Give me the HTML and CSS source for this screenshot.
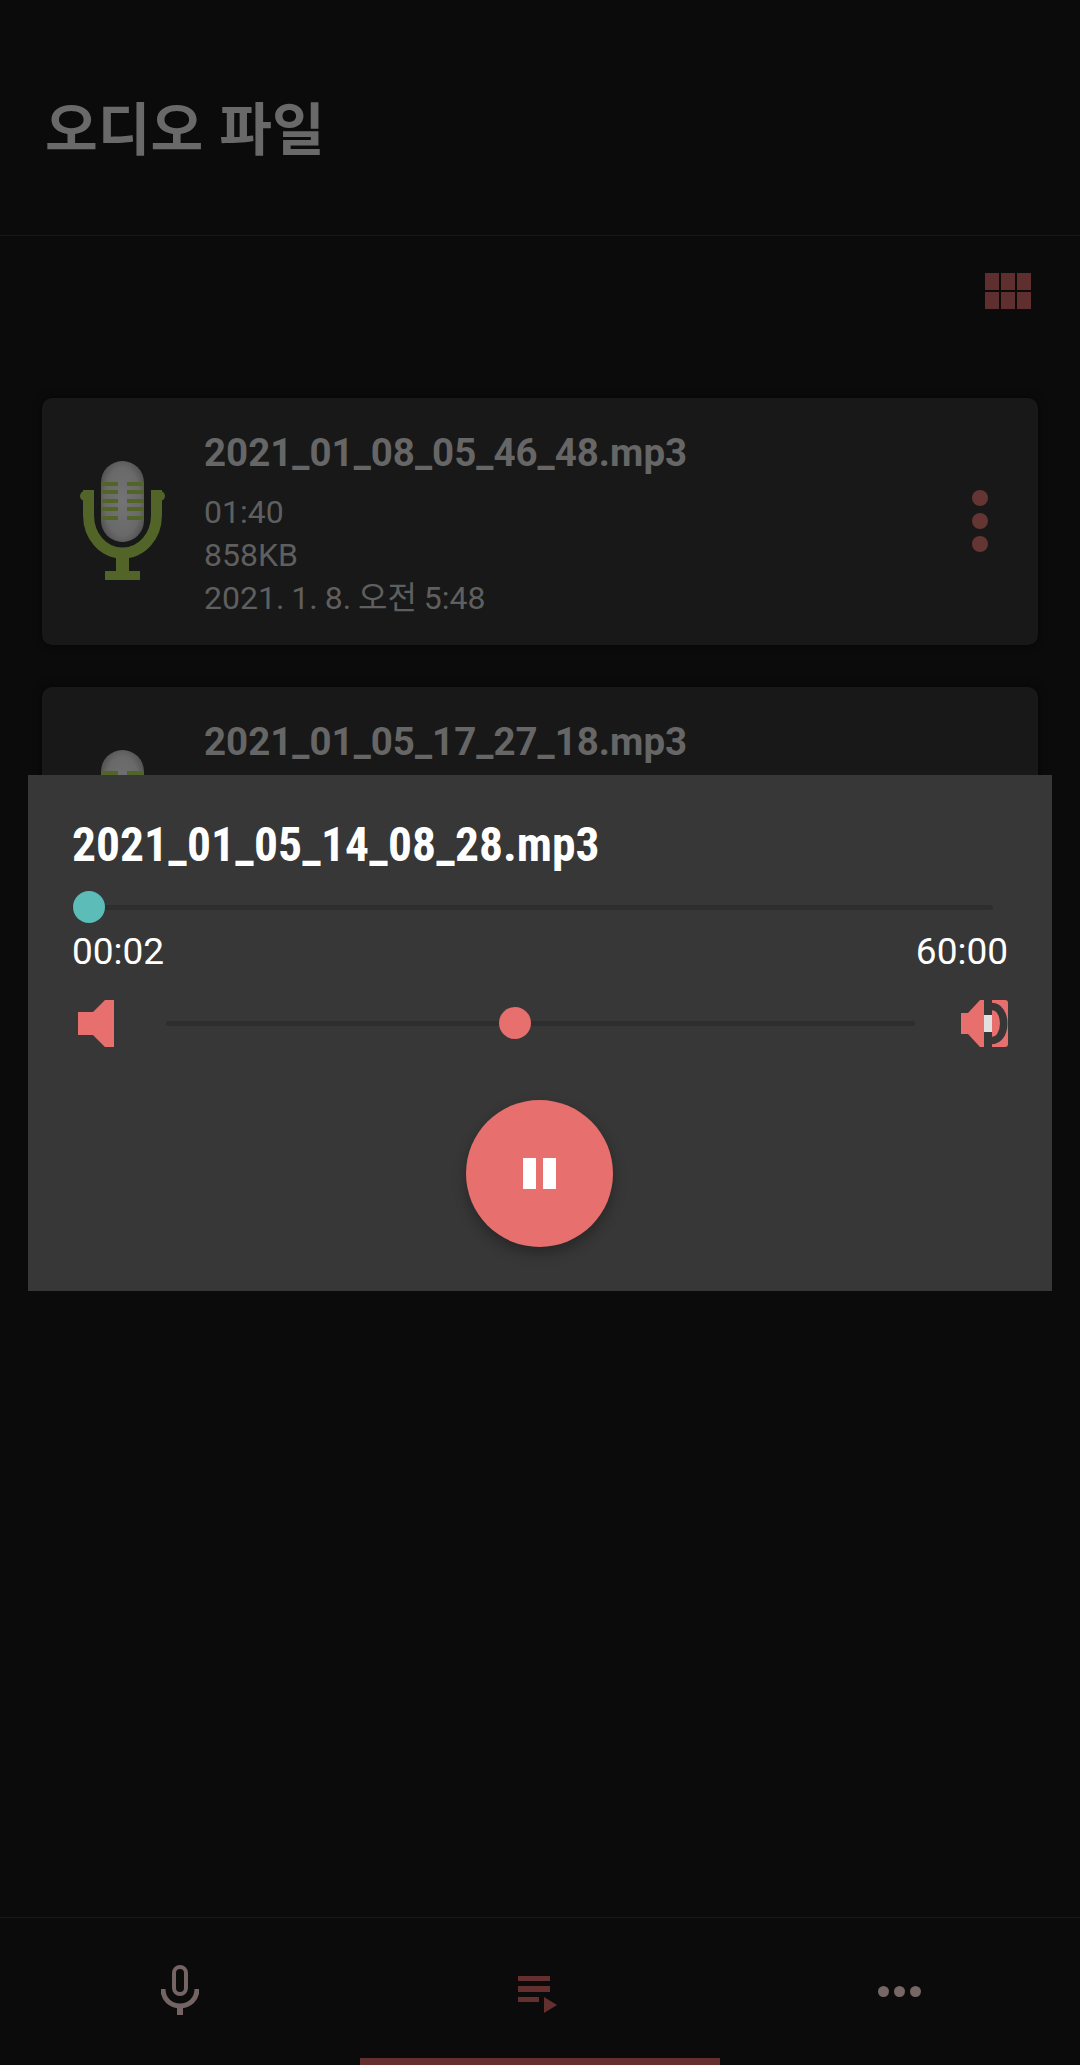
FILE: index.html
```html
<!DOCTYPE html>
<html lang="ko">
<head>
    <meta charset="UTF-8">
    <meta name="viewport" content="width=device-width, initial-scale=1.0">
    <title>오디오 파일</title>
    <link rel="stylesheet" href="styles.css">
</head>
<body>
    <div class="app">
        <header class="top-bar">
            <h1>오디오 파일</h1>
        </header>

        <main class="content">
            <div class="toolbar">
                <div class="grid-icon">
                    <span></span><span></span><span></span>
                    <span></span><span></span><span></span>
                </div>
            </div>

            <div class="card">
                <svg class="mic-logo" viewBox="0 0 90 124">
                    <defs>
                        <radialGradient id="capsule" cx="0.5" cy="0.5" r="0.6">
                            <stop offset="0" stop-color="#747474"/>
                            <stop offset="0.7" stop-color="#696969"/>
                            <stop offset="1" stop-color="#4e4e4e"/>
                        </radialGradient>
                    </defs>
                    <rect x="23" y="3" width="43" height="81" rx="21.5" fill="url(#capsule)"/>
                    <path fill="#526427" d="M24 24h16v4H24zM49 24h17v4H49zM24 32h16v4H24zM49 32h17v4H49zM24 41h16v4H24zM49 41h17v4H49zM24 49h16v4H24zM49 49h17v4H49zM24 58h16v4H24zM49 58h17v4H49z"/>
                    <path fill="none" stroke="#526427" stroke-width="11" d="M10.500 32v25c0 21 14.500 38 34 38s34-17 34-38V32"/>
                    <circle cx="7" cy="38" r="5" fill="#526427"/>
                    <circle cx="82" cy="38" r="5" fill="#526427"/>
                    <path fill="#526427" d="M38 98h13v15h11v9H27v-9h11z"/>
                </svg>
                <div class="card-text">
                    <div class="card-title">2021_01_08_05_46_48.mp3</div>
                    <div class="card-meta">01:40</div>
                    <div class="card-meta">858KB</div>
                    <div class="card-meta">2021. 1. 8. 오전 5:48</div>
                </div>
                <div class="more-dots"><span></span><span></span><span></span></div>
            </div>

            <div class="card">
                <svg class="mic-logo" viewBox="0 0 90 124">
                    <rect x="23" y="3" width="43" height="81" rx="21.5" fill="url(#capsule)"/>
                    <path fill="#526427" d="M24 24h16v4H24zM49 24h17v4H49z"/>
                </svg>
                <div class="card-text">
                    <div class="card-title">2021_01_05_17_27_18.mp3</div>
                </div>
            </div>
        </main>

        <nav class="bottom-nav">
            <div class="tab">
                <svg class="nav-mic" viewBox="0 0 38 50">
                    <rect x="13" y="2" width="12" height="27" rx="6" fill="none" stroke="#746464" stroke-width="4"/>
                    <path d="M2 24c0 10 7.500 17 17 17s17-7 17-17" fill="none" stroke="#746464" stroke-width="5"/>
                    <rect x="16" y="40" width="6" height="10" fill="#746464"/>
                </svg>
            </div>
            <div class="tab active">
                <svg class="nav-list" viewBox="0 0 40 38">
                    <path fill="#642f2f" d="M0 0h32v5H0zM0 10h32v6H0zM0 21h21v5H0zM26 21l13 8-13 8z"/>
                </svg>
            </div>
            <div class="tab">
                <div class="nav-dots"><span></span><span></span><span></span></div>
            </div>
        </nav>

        <section class="player">
            <div class="player-title">2021_01_05_14_08_28.mp3</div>
            <div class="track seek"><span class="thumb thumb-seek"></span></div>
            <div class="times">
                <span>00:02</span>
                <span>60:00</span>
            </div>
            <div class="volume">
                <svg class="vol-low" viewBox="0 0 36 47">
                    <path fill="#e76f6d" d="M0 12h15L27 0h9v47h-9L15 35H0z"/>
                </svg>
                <div class="track"><span class="thumb thumb-volume"></span></div>
                <svg class="vol-high" viewBox="0 0 47 47">
                    <path fill="#e76f6d" d="M0 13h7L19 0h4v47h-4L7 34H0z"/>
                    <rect x="23" y="15" width="8" height="17" fill="#e0e0e0"/>
                    <path fill="#e76f6d" d="M31 0h13a3 3 0 0 1 3 3v41a3 3 0 0 1-3 3H31z"/>
                    <path fill="none" stroke="#373737" stroke-width="7.500" d="M31 6.500c7 0 11.700 7.600 11.700 17s-4.700 17-11.700 17"/>
                </svg>
            </div>
            <div class="pause-row">
                <button class="pause-btn"><span></span><span></span></button>
            </div>
        </section>
    </div>
</body>
</html>
```

FILE: styles.css
```css
* { box-sizing: border-box; }

html, body {
    margin: 0;
    padding: 0;
}

body {
    background-color: #0b0b0b;
    font-family: Roboto, "Noto Sans CJK KR", sans-serif;
}

.app {
    position: relative;
    width: 1080px;
    height: 2065px;
    display: flex;
    flex-direction: column;
    overflow: hidden;
}

.top-bar {
    height: 236px;
    padding: 89px 0 0 45px;
    border-bottom: 1px solid #181818;
}

h1 {
    margin: 0;
    font-family: "Noto Sans CJK KR", sans-serif;
    font-size: 57.300px;
    line-height: 74px;
    font-weight: 700;
    color: #696969;
}

.content {
    flex: 1;
    overflow: hidden;
    padding: 37px 42px 0;
}

.toolbar {
    display: flex;
    justify-content: flex-end;
    padding-right: 7px;
    margin-bottom: 89px;
}

.grid-icon {
    display: grid;
    grid-template-columns: repeat(3, 14px);
    grid-template-rows: repeat(2, 17px);
    gap: 2px;
}

.grid-icon span { background-color: #5e2f2e; }

.card {
    display: flex;
    height: 247px;
    margin-bottom: 42px;
    padding-left: 36px;
    background-color: #181818;
    border-radius: 10px;
    box-shadow: 0 0 8px rgba(0, 0, 0, 0.6);
}

.mic-logo {
    flex: none;
    width: 90px;
    height: 124px;
    margin-top: 60px;
}

.card-text {
    flex: 1;
    padding: 33px 0 0 36px;
}

.card-title {
    font-size: 38.500px;
    line-height: 44px;
    font-weight: 700;
    color: #666;
    margin-bottom: 16px;
}

.card-meta {
    font-size: 32px;
    line-height: 43px;
    word-spacing: -1px;
    color: #5f5f5f;
}

.more-dots {
    display: flex;
    flex-direction: column;
    gap: 7px;
    padding: 92px 50px 0 0;
}

.more-dots span {
    width: 16px;
    height: 16px;
    border-radius: 50%;
    background-color: #653534;
}

.bottom-nav {
    display: grid;
    grid-template-columns: repeat(3, 360px);
    height: 148px;
    border-top: 1px solid #181818;
}

.tab {
    display: flex;
    align-items: center;
    justify-content: center;
}

.tab.active { box-shadow: inset 0 -7px 0 #642f2f; }

.nav-mic {
    width: 38px;
    height: 50px;
    margin-bottom: 3px;
}

.nav-list {
    width: 40px;
    height: 38px;
    margin: 6px 5px 0 0;
}

.nav-dots {
    display: flex;
    gap: 5px;
    margin-right: 1px;
}

.nav-dots span {
    width: 11px;
    height: 11px;
    border-radius: 50%;
    background-color: #766666;
}

/* dialogo encima de la lista */
.player {
    position: absolute;
    left: 28px;
    top: 775px;
    width: 1024px;
    height: 516px;
    padding: 42px 44px 0 44px;
    background-color: #373737;
}

.player-title {
    font-family: "Roboto Condensed", "Liberation Sans Narrow", Roboto, sans-serif;
    font-size: 47.500px;
    line-height: 56px;
    font-weight: 700;
    color: #fff;
}

.track {
    position: relative;
    height: 5px;
    background-color: #2e2e2e;
    border-radius: 3px;
}

.seek {
    margin: 32px 15px 0 0;
}

.thumb {
    position: absolute;
    top: -14px;
    width: 32px;
    height: 32px;
    border-radius: 50%;
}

.thumb-seek {
    left: 1px;
    background-color: #5bbcb8;
}

.thumb-volume {
    left: 333px;
    background-color: #e76f6d;
}

.times {
    display: flex;
    justify-content: space-between;
    margin-top: 20px;
    font-size: 37px;
    line-height: 44px;
    color: #fff;
}

.volume {
    display: flex;
    align-items: center;
    margin-top: 26px;
    padding-left: 6px;
}

.volume .track {
    flex: none;
    width: 749px;
    margin: 0 46px 0 52px;
}

.vol-low {
    flex: none;
    width: 36px;
    height: 47px;
}

.vol-high {
    flex: none;
    width: 47px;
    height: 47px;
}

.pause-row {
    display: flex;
    justify-content: center;
    margin: 53px 0 0 -1px;
}

.pause-btn {
    display: flex;
    align-items: center;
    justify-content: center;
    gap: 7px;
    width: 147px;
    height: 147px;
    padding: 0;
    border: none;
    border-radius: 50%;
    background-color: #e76f6d;
    box-shadow: 0 6px 14px rgba(0, 0, 0, 0.3);
}

.pause-btn span {
    width: 13px;
    height: 31px;
    background-color: #fff;
}
```
